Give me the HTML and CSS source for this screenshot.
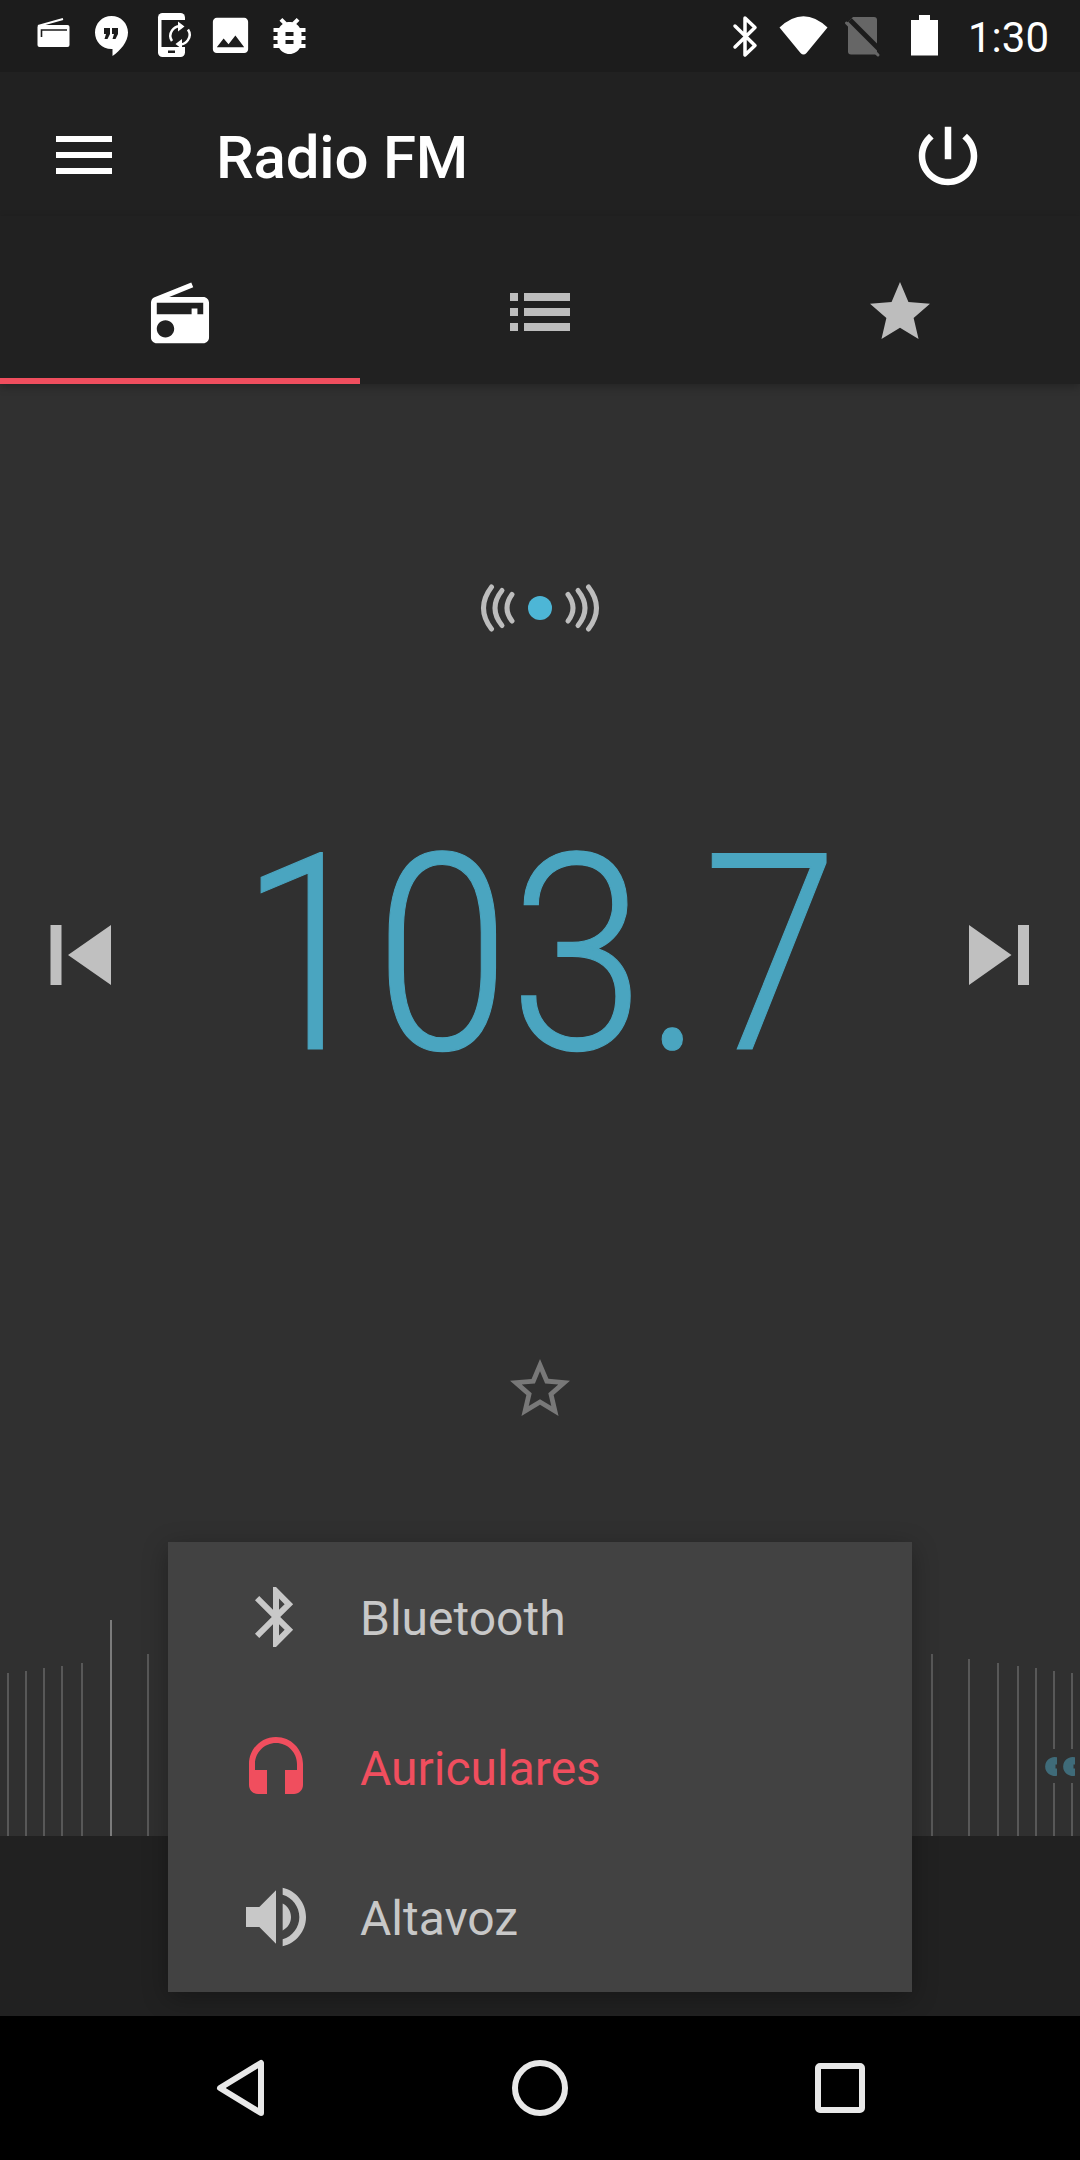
FILE: index.html
```html
<!DOCTYPE html>
<html lang="es">
<head>
  <meta charset="UTF-8">
  <meta name="viewport" content="width=device-width, initial-scale=1.0">
  <title>Radio FM</title>
  <link rel="stylesheet" href="styles.css">
</head>
<body>
  <div class="screen">
    <div class="status-bar">
      <div class="status-icons">
        <svg class="status-slot" viewBox="24 0 60 72">
          <path d="M38 26 L63 19" stroke="#fff" stroke-width="2" fill="none"/>
          <rect x="37.5" y="25" width="32" height="22" rx="2" fill="#fff"/>
          <path d="M41.5 37 V30 H67" stroke="#1c1c1c" stroke-width="1.6" fill="none"/>
        </svg>
        <svg class="status-slot" viewBox="84 0 60 72">
          <path d="M111.5 16 C102 16 95 23.500 95 32.500 C95 41.500 102 49 111.500 49 H112.500 V56 C120 51 128 42 128 32.500 C128 23.500 121 16 111.500 16 Z" fill="#fff"/>
          <path d="M104 28 H110 V34 L107.500 39 H104.500 L106 34 H104 Z M112 28 H118 V34 L115.500 39 H112.500 L114 34 H112 Z" fill="#1c1c1c"/>
        </svg>
        <svg class="status-slot" viewBox="144 0 60 72">
          <rect x="158" y="13" width="27" height="44" rx="4.500" fill="#fff"/>
          <rect x="161.500" y="20" width="26" height="27" fill="#1c1c1c"/>
          <rect x="168" y="50.500" width="7" height="2.500" fill="#1c1c1c"/>
          <path d="M172 41 A9.500 9.500 0 0 1 182 26.500" stroke="#fff" stroke-width="2.500" fill="none"/>
          <path d="M188 29.500 A9.500 9.500 0 0 1 178 44" stroke="#fff" stroke-width="2.500" fill="none"/>
          <path d="M178 21.500 L184.500 26.500 L178 31.500 Z M182 39 L175.500 44 L182 49 Z" fill="#fff"/>
        </svg>
        <svg class="status-slot" viewBox="204 0 60 72">
          <path transform="translate(207 12) scale(1.958)" d="M21 19V5c0-1.100-.9-2-2-2H5c-1.100 0-2 .9-2 2v14c0 1.100.9 2 2 2h14c1.100 0 2-.9 2-2zM8.500 13.500l2.500 3.010L14.500 12l4.500 6H5l3.500-4.500z" fill="#fff"/>
        </svg>
        <svg class="status-slot" viewBox="264 0 60 72">
          <path transform="translate(265.500 12) scale(2)" d="M20 8h-2.810c-.45-.78-1.070-1.450-1.820-1.960L17 4.410 15.590 3l-2.170 2.170C12.960 5.060 12.490 5 12 5c-.49 0-.96.06-1.410.17L8.410 3 7 4.410l1.620 1.630C7.880 6.550 7.260 7.220 6.810 8H4v2h2.090c-.05.33-.09.66-.09 1v1H4v2h2v1c0 .34.04.67.09 1H4v2h2.810c1.040 1.790 2.970 3 5.190 3s4.150-1.210 5.190-3H20v-2h-2.090c.05-.33.09-.66.09-1v-1h2v-2h-2v-1c0-.34-.04-.67-.09-1H20V8zm-6 8h-4v-2h4v2zm0-4h-4v-2h4v2z" fill="#fff"/>
        </svg>
      </div>
      <div class="status-icons">
        <svg class="status-slot" viewBox="716 0 60 72">
          <path d="M735 26 L755 45.500 L745 55 V18 L755 27.500 L735 47" stroke="#fff" stroke-width="3.500" stroke-linejoin="round" stroke-linecap="round" fill="none"/>
        </svg>
        <svg class="status-slot" viewBox="776 0 60 72">
          <path d="M779.500 27.500 Q803.500 5 827.500 27.500 L806.500 53 Q803.500 56 800.500 53 Z" fill="#fff"/>
        </svg>
        <svg class="status-slot" viewBox="836 0 60 72">
          <path d="M853 17 H874 Q877 17 877 20 V54.500 H851 Q848 54.500 848 51.500 V22 Z" fill="#666"/>
          <path d="M850 20 L882 52" stroke="#1c1c1c" stroke-width="5" fill="none"/>
          <path d="M846.500 23 L878 55" stroke="#666" stroke-width="3" stroke-linecap="round" fill="none"/>
        </svg>
        <svg class="status-slot" viewBox="896 0 60 72">
          <path d="M919 15 H930 V20 H938 V55.500 H911 V20 H919 Z" fill="#fff"/>
        </svg>
        <span class="clock">1:30</span>
      </div>
    </div>

    <div class="toolbar">
      <svg class="menu-icon" viewBox="0 0 56 38">
        <rect y="0" width="56" height="6" fill="#fff"/>
        <rect y="16" width="56" height="6" fill="#fff"/>
        <rect y="32" width="56" height="6" fill="#fff"/>
      </svg>
      <span class="title">Radio FM</span>
      <svg class="power-icon" viewBox="0 0 24 24">
        <path d="M13 3h-2v10h2V3zm4.830 2.170l-1.420 1.420C17.990 7.860 19 9.810 19 12c0 3.870-3.130 7-7 7s-7-3.130-7-7c0-2.190 1.010-4.140 2.580-5.420L6.170 5.170C4.230 6.820 3 9.260 3 12c0 4.970 4.030 9 9 9s9-4.030 9-9c0-2.740-1.230-5.180-3.170-6.830z" fill="#fff"/>
      </svg>
    </div>

    <div class="tabs">
      <div class="tab tab-active">
        <svg class="tab-icon" viewBox="-0.4 -1.2 24.8 24.8">
          <path d="M3.240 6.150C2.510 6.430 2 7.170 2 8v12c0 1.100.89 2 2 2h16c1.110 0 2-.9 2-2V8c0-1.110-.89-2-2-2H8.300l8.260-3.340L15.880 1 3.240 6.150zM7 20c-1.660 0-3-1.340-3-3s1.340-3 3-3 3 1.340 3 3-1.340 3-3 3zm13-8h-2v-2h-2v2H4V8h16v4z" fill="#fff"/>
        </svg>
      </div>
      <div class="tab">
        <svg class="tab-icon" viewBox="0 0 72 72">
          <path d="M6 17 H14 V25 H6 Z M20 17 H66 V25 H20 Z M6 32 H14 V40 H6 Z M20 32 H66 V40 H20 Z M6 47 H14 V55 H6 Z M20 47 H66 V55 H20 Z" fill="#bdbdbd"/>
        </svg>
      </div>
      <div class="tab">
        <svg class="tab-icon" viewBox="0 0 24 24">
          <path d="M12 17.270L18.180 21l-1.640-7.030L22 9.240l-7.190-.61L12 2 9.190 8.630 2 9.240l5.460 4.730L5.820 21z" fill="#bdbdbd"/>
        </svg>
      </div>
    </div>

    <main class="tuner">
      <svg class="signal" viewBox="0 0 120 60">
        <g stroke="#bdbdbd" stroke-width="5" stroke-linecap="round" fill="none">
          <path d="M11.500 9 Q-4.500 30 11.500 51"/>
          <path d="M22 12.500 Q8 30 22 47.500"/>
          <path d="M32 16.500 Q22 30 32 43"/>
          <path d="M108.500 9 Q124.500 30 108.500 51"/>
          <path d="M98 12.500 Q112 30 98 47.500"/>
          <path d="M88 16.500 Q98 30 88 43"/>
        </g>
        <circle cx="60" cy="30" r="12" fill="#4db6d6"/>
      </svg>

      <div class="frequency-row">
        <svg class="skip-icon" viewBox="0 0 120 120">
          <path d="M30.500 30 H41.500 V90 H30.500 Z M48 60 L91 30 V90 Z" fill="#c0c0c0"/>
        </svg>
        <span class="frequency">103.7</span>
        <svg class="skip-icon" viewBox="0 0 120 120">
          <path d="M30 30 L72.500 60 L30 90 Z M79 30 H90 V90 H79 Z" fill="#c0c0c0"/>
        </svg>
      </div>

      <svg class="favorite" viewBox="0 0 24 24">
        <path d="M22 9.240l-7.190-.62L12 2 9.190 8.630 2 9.240l5.460 4.730L5.820 21 12 17.270 18.180 21l-1.630-7.030L22 9.240zM12 15.400l-3.760 2.270 1-4.280-3.320-2.880 4.380-.38L12 6.100l1.710 4.040 4.380.38-3.320 2.880 1 4.280L12 15.400z" fill="#787878"/>
      </svg>

      <div class="dial">
        <i class="tick" style="left:7px;height:163px"></i>
        <i class="tick" style="left:25px;height:165px"></i>
        <i class="tick" style="left:43px;height:168px"></i>
        <i class="tick" style="left:61px;height:170px"></i>
        <i class="tick" style="left:81px;height:173px"></i>
        <i class="tick tick-major" style="left:110px;height:216px"></i>
        <i class="tick" style="left:147px;height:182px"></i>
        <i class="tick" style="left:931px;height:182px"></i>
        <i class="tick" style="left:968px;height:177px"></i>
        <i class="tick" style="left:997px;height:173px"></i>
        <i class="tick" style="left:1017px;height:170px"></i>
        <i class="tick" style="left:1035px;height:168px"></i>
        <i class="tick" style="left:1053px;height:165px"></i>
        <i class="tick" style="left:1071px;height:163px"></i>
        <svg class="dial-marker" viewBox="0 0 40 34">
          <path d="M17 8.300 A9.500 9.500 0 1 0 17 26.700 V19.500 H15.500 V15.500 H17 Z M35 8.300 A9.500 9.500 0 1 0 35 26.700 V19.500 H33.500 V15.500 H35 Z" fill="#3f6b79"/>
        </svg>
      </div>
    </main>

    <div class="bottom-bar"></div>

    <div class="nav-bar">
      <svg class="nav-icon" viewBox="0 0 72 72">
        <path d="M57 11 V61 L16 36 Z" stroke="#e8e8e8" stroke-width="6" stroke-linejoin="round" fill="none"/>
      </svg>
      <svg class="nav-icon" viewBox="0 0 72 72">
        <circle cx="36" cy="36" r="25" stroke="#e8e8e8" stroke-width="6" fill="none"/>
      </svg>
      <svg class="nav-icon" viewBox="0 0 72 72">
        <rect x="14" y="14" width="44" height="44" rx="2" stroke="#e8e8e8" stroke-width="6" fill="none"/>
      </svg>
    </div>

    <div class="output-menu">
      <div class="output-item">
        <svg class="output-icon" viewBox="0 0 24 24">
          <path d="M17.710 7.710L12 2h-1v7.590L6.410 5 5 6.410 10.590 12 5 17.590 6.410 19 11 14.410V22h1l5.710-5.710-4.300-4.290 4.300-4.290zM13 5.830l1.880 1.880L13 9.590V5.830zm1.880 10.460L13 18.170v-3.760l1.880 1.880z" fill="#c8c8c8"/>
        </svg>
        <span>Bluetooth</span>
      </div>
      <div class="output-item output-selected">
        <svg class="output-icon" viewBox="0 -1 24 24">
          <path d="M12 1c-4.970 0-9 4.030-9 9v7c0 1.660 1.340 3 3 3h3v-8H5v-2c0-3.870 3.130-7 7-7s7 3.130 7 7v2h-4v8h3c1.660 0 3-1.340 3-3v-7c0-4.970-4.030-9-9-9z" fill="#f04e5e"/>
        </svg>
        <span>Auriculares</span>
      </div>
      <div class="output-item">
        <svg class="output-icon output-icon-large" viewBox="0 0 24 24">
          <path d="M3 9v6h4l5 5V4L7 9H3zm13.500 3c0-1.770-1.020-3.290-2.500-4.030v8.050c1.480-.73 2.500-2.250 2.500-4.020zM14 3.230v2.060c2.890.86 5 3.540 5 6.710s-2.110 5.850-5 6.710v2.060c4.010-.91 7-4.490 7-8.770s-2.990-7.860-7-8.770z" fill="#c8c8c8"/>
        </svg>
        <span>Altavoz</span>
      </div>
    </div>
  </div>
</body>
</html>
```

FILE: styles.css
```css
* {
  box-sizing: border-box;
}
html, body {
  margin: 0;
  padding: 0;
  background: #000;
}
body {
  font-family: Roboto, "Liberation Sans", sans-serif;
}
svg {
  display: block;
  flex: none;
}
.screen {
  position: relative;
  display: flex;
  flex-direction: column;
  width: 1080px;
  height: 2160px;
  overflow: hidden;
  background: #303030;
}

/* status bar */
.status-bar {
  display: flex;
  justify-content: space-between;
  height: 72px;
  padding: 0 31px 0 24px;
  background: #1c1c1c;
}
.status-icons {
  display: flex;
  align-items: center;
}
.status-slot {
  width: 60px;
  height: 72px;
}
.clock {
  margin: 2px 0 0 12px;
  font-size: 42px;
  color: #fff;
}

/* toolbar and tabs */
.toolbar {
  display: flex;
  align-items: center;
  height: 144px;
  padding: 22px 93px 0 56px;
  background: #212121;
}
.menu-icon {
  width: 56px;
  height: 38px;
}
.title {
  margin: 5px 0 0 104px;
  font-size: 60px;
  font-weight: 500;
  letter-spacing: -0.2px;
  color: #fff;
}
.power-icon {
  width: 78px;
  height: 78px;
  margin: 2px 0 0 auto;
}
.tabs {
  position: relative;
  z-index: 1;
  display: flex;
  height: 168px;
  background: #212121;
  box-shadow: 0 3px 8px rgba(0, 0, 0, 0.25);
}
.tab {
  flex: 1;
  display: flex;
  justify-content: center;
  padding-top: 60px;
  border-bottom: 6px solid transparent;
}
.tab-active {
  border-bottom-color: #f04e5e;
}
.tab-icon {
  width: 72px;
  height: 72px;
}

/* tuner */
.tuner {
  flex: 1;
  display: flex;
  flex-direction: column;
  align-items: center;
  padding-top: 194px;
}
.signal {
  width: 120px;
  height: 60px;
}
.frequency-row {
  display: flex;
  align-items: center;
  justify-content: space-between;
  width: 100%;
  height: 240px;
  margin-top: 197px;
  padding: 0 21px 0 20px;
}
.skip-icon {
  width: 120px;
  height: 120px;
}
.frequency {
  font-size: 275px;
  font-weight: 300;
  line-height: 240px;
  color: #4aa5c0;
  -webkit-text-stroke: 1.2px #4aa5c0;
  transform: translateX(-1px) scaleX(0.885);
}
.favorite {
  width: 72px;
  height: 72px;
  margin-top: 278px;
}
.dial {
  position: relative;
  width: 100%;
  height: 216px;
  margin-top: auto;
}
.tick {
  position: absolute;
  bottom: 0;
  width: 2px;
  background: #585858;
}
.tick-major {
  background: #7b7b7b;
}
.dial-marker {
  position: absolute;
  left: 1040px;
  top: 129px;
  width: 40px;
  height: 34px;
  background: #303030;
}

/* bottom */
.bottom-bar {
  height: 180px;
  background: #212121;
}
.nav-bar {
  display: flex;
  align-items: center;
  justify-content: space-between;
  height: 144px;
  padding: 0 204px;
  background: #000;
}
.nav-icon {
  width: 72px;
  height: 72px;
}

/* audio output popup */
.output-menu {
  position: absolute;
  left: 168px;
  top: 1542px;
  width: 744px;
  height: 450px;
  background: #424242;
  box-shadow: 0 6px 24px rgba(0, 0, 0, 0.3);
}
.output-item {
  display: flex;
  align-items: center;
  height: 150px;
  padding-left: 72px;
  font-size: 48px;
  color: #c8c8c8;
}
.output-item span {
  margin-top: 2px;
}
.output-selected {
  color: #f04e5e;
}
.output-icon {
  width: 72px;
  height: 72px;
  margin-right: 48px;
}
.output-icon-large {
  width: 80px;
  height: 80px;
  margin: 0 44px 0 -4px;
}
```
